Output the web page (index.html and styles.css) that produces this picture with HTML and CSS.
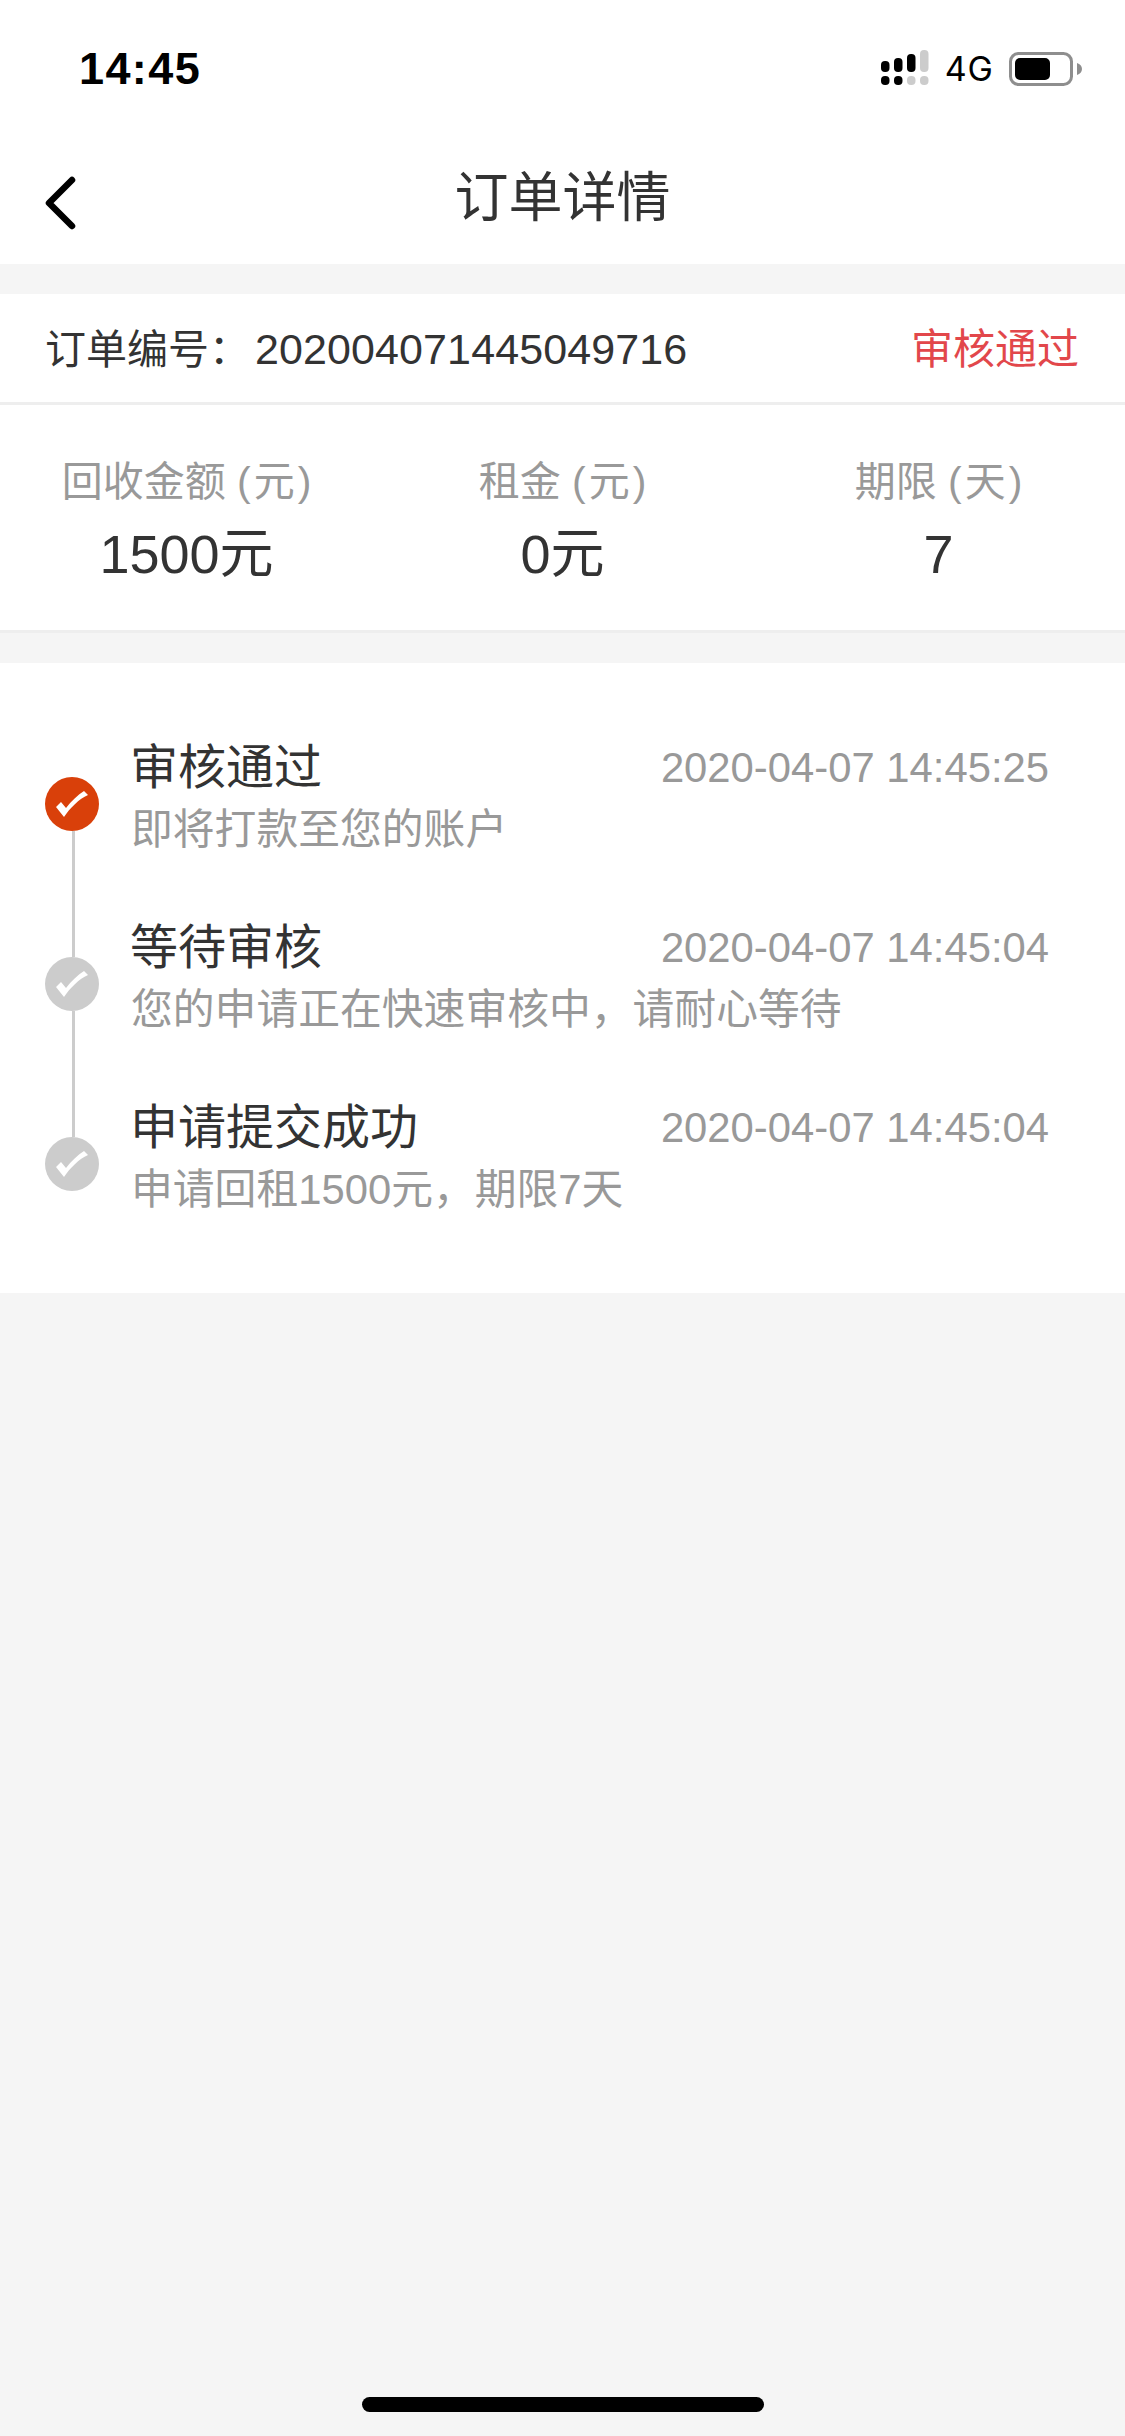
FILE: index.html
```html
<!DOCTYPE html>
<html lang="zh-CN">
<head>
<meta charset="utf-8">
<title>订单详情</title>
<link rel="stylesheet" href="styles.css">
</head>
<body>
<div class="page">
  <header class="top">
    <div class="status">
      <span class="clock">14:45</span>
      <div class="status-right">
        <svg class="signal" width="48" height="35" viewBox="0 0 48 35">
          <rect x="0" y="11" width="8.5" height="11" rx="4" fill="#000"/>
          <rect x="13" y="8" width="8.5" height="14" rx="4" fill="#000"/>
          <rect x="26" y="4" width="8.5" height="18" rx="4" fill="#000"/>
          <rect x="39" y="0" width="8.5" height="22" rx="4" fill="#ccc"/>
          <rect x="0" y="26" width="8.5" height="9" rx="4" fill="#000"/>
          <rect x="13" y="26" width="8.5" height="9" rx="4" fill="#000"/>
          <rect x="26" y="26" width="8.5" height="9" rx="4" fill="#ccc"/>
          <rect x="39" y="26" width="8.5" height="9" rx="4" fill="#ccc"/>
        </svg>
        <span class="net">4G</span>
        <svg class="battery" width="73" height="34" viewBox="0 0 73 34">
          <rect x="1.5" y="1.5" width="61" height="31" rx="8" fill="none" stroke="#8e8e8e" stroke-width="3"/>
          <rect x="6" y="6" width="35" height="22" rx="5" fill="#000"/>
          <path d="M68 11c3 1 5 3 5 6s-2 5-5 6z" fill="#8e8e8e"/>
        </svg>
      </div>
    </div>
    <nav class="nav">
      <svg class="back" width="34" height="60" viewBox="0 0 34 60">
        <path d="M29 8 L6 31 L29 54" fill="none" stroke="#000" stroke-width="6.5" stroke-linecap="round" stroke-linejoin="round"/>
      </svg>
      <h1 class="title">订单详情</h1>
    </nav>
  </header>

  <section class="order-row">
    <span class="order-no">订单编号：<span class="digits">202004071445049716</span></span>
    <span class="order-state">审核通过</span>
  </section>

  <section class="stats">
    <div class="stat"><span class="stat-label">回收金额 <span class="unit">(元)</span></span><span class="stat-value">1500元</span></div>
    <div class="stat"><span class="stat-label">租金 <span class="unit">(元)</span></span><span class="stat-value">0元</span></div>
    <div class="stat"><span class="stat-label">期限 <span class="unit">(天)</span></span><span class="stat-value">7</span></div>
  </section>

  <section class="timeline">
    <div class="step step-active">
      <div class="rail">
        <span class="seg seg-top seg-none"></span>
        <span class="dot"><svg width="34" height="28" viewBox="0 0 34 28"><path d="M1 17 L6 12 L11 18 C16 11 23 5 29 1 L33 5 C24 9 15 18 9 27 Z" fill="#fff"/></svg></span>
        <span class="seg seg-bottom"></span>
      </div>
      <div class="step-body">
        <div class="step-head"><span class="step-title">审核通过</span><span class="step-time">2020-04-07 14:45:25</span></div>
        <p class="step-desc">即将打款至您的账户</p>
      </div>
    </div>
    <div class="step">
      <div class="rail">
        <span class="seg seg-top"></span>
        <span class="dot"><svg width="34" height="28" viewBox="0 0 34 28"><path d="M1 17 L6 12 L11 18 C16 11 23 5 29 1 L33 5 C24 9 15 18 9 27 Z" fill="#fff"/></svg></span>
        <span class="seg seg-bottom"></span>
      </div>
      <div class="step-body">
        <div class="step-head"><span class="step-title">等待审核</span><span class="step-time">2020-04-07 14:45:04</span></div>
        <p class="step-desc">您的申请正在快速审核中，请耐心等待</p>
      </div>
    </div>
    <div class="step">
      <div class="rail">
        <span class="seg seg-top"></span>
        <span class="dot"><svg width="34" height="28" viewBox="0 0 34 28"><path d="M1 17 L6 12 L11 18 C16 11 23 5 29 1 L33 5 C24 9 15 18 9 27 Z" fill="#fff"/></svg></span>
        <span class="seg seg-bottom seg-none"></span>
      </div>
      <div class="step-body">
        <div class="step-head"><span class="step-title">申请提交成功</span><span class="step-time">2020-04-07 14:45:04</span></div>
        <p class="step-desc">申请回租1500元，期限7天</p>
      </div>
    </div>
  </section>

  <div class="spacer"></div>
  <div class="home-bar"></div>
</div>
</body>
</html>
```

FILE: styles.css
```css
* { box-sizing: border-box; }
html, body { margin: 0; padding: 0; }
body {
  background: #f5f5f5;
  font-family: "Liberation Sans", "Noto Sans CJK SC", sans-serif;
  color: #333;
}
.page {
  width: 1125px;
  height: 2436px;
  display: flex;
  flex-direction: column;
  overflow: hidden;
}
.top { height: 264px; background: #fff; display: flex; flex-direction: column; }
.status {
  height: 132px;
  padding: 5px 43px 0 79px;
  display: flex;
  justify-content: space-between;
  align-items: center;
}
.clock { font-size: 45px; font-weight: 700; color: #000; letter-spacing: 1.4px; }
.status-right { display: flex; align-items: center; }
.signal { margin: -3px 16px 0 0; }
.net { font-family: Inter, "Liberation Sans", sans-serif; font-size: 34px; font-weight: 400; letter-spacing: 1px; color: #000; margin-right: 15px; }
.nav {
  flex: 1;
  position: relative;
  display: flex;
  align-items: center;
  justify-content: center;
}
.back { position: absolute; left: 43px; top: 40px; }
.title {
  margin: 0;
  font-size: 54px;
  font-weight: 400;
  line-height: 64px;
  color: #333;
}
.order-row {
  margin-top: 30px;
  height: 111px;
  background: #fff;
  border-bottom: 3px solid #eee;
  padding: 0 46px 5px 45px;
  display: flex;
  justify-content: space-between;
  align-items: center;
}
.order-no { font-size: 41px; color: #333; }
.digits { font-size: 43px; margin-left: 5px; letter-spacing: 0.1px; }
.order-state { font-size: 42px; color: #e2474b; }
.stats {
  height: 228px;
  background: #fff;
  border-bottom: 3px solid #eee;
  padding: 51px 0 0;
  display: grid;
  grid-template-columns: 373px 379px 373px;
}
.stat { display: flex; flex-direction: column; align-items: center; }
.stat-label { font-size: 41px; line-height: 52px; color: #999; margin-left: 3px; }
.unit { letter-spacing: 3px; }
.stat-value { font-size: 54px; line-height: 70px; color: #333; margin-top: 11px; }
.timeline {
  margin-top: 30px;
  background: #fff;
  padding: 60px 0 30px;
}
.step { height: 180px; display: flex; }
.rail {
  width: 54px;
  margin-left: 45px;
  display: flex;
  flex-direction: column;
  align-items: center;
}
.seg { width: 3px; background: #ccc; margin-left: 3px; }
.seg-none { background: transparent; }
.seg-top { height: 54px; flex: none; }
.seg-bottom { flex: 1; }
.dot {
  width: 54px;
  height: 54px;
  flex: none;
  border-radius: 50%;
  background: #ccc;
  display: flex;
  align-items: center;
  justify-content: center;
}
.step-active .dot { background: #d9400a; }
.step-body { flex: 1; padding: 10px 76px 0 31px; }
.step-head { display: flex; justify-content: space-between; align-items: center; height: 60px; }
.step-title { font-size: 48px; color: #333; }
.step-time { font-size: 41.8px; color: #999; margin-top: 10px; }
.step-desc { margin: 7px 0 0 1px; font-size: 41.8px; line-height: 60px; color: #999; }
.spacer { flex: 1; }
.home-bar {
  width: 402px;
  height: 15px;
  border-radius: 8px;
  background: #000;
  margin: 0 auto 24px;
  flex: none;
}
```
